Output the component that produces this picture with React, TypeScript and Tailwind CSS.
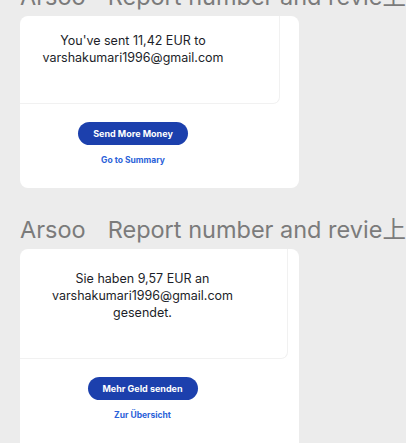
import React from "react";

type Receipt = {
  lines: string[];
  cta: string;
  link: string;
  colWidth: string;
  panelWidth: string;
  panelHeight: string;
  textTop: string;
  bottom: string;
};

const RECEIPTS: Receipt[] = [
  {
    lines: ["You've sent 11,42 EUR to", "varshakumari1996@gmail.com"],
    cta: "Send More Money",
    link: "Go to Summary",
    colWidth: "w-[226px]",
    panelWidth: "w-[260px]",
    panelHeight: "h-[88px]",
    textTop: "pt-[16px]",
    bottom: "pb-[22px]",
  },
  {
    lines: ["Sie haben 9,57 EUR an", "varshakumari1996@gmail.com", "gesendet."],
    cta: "Mehr Geld senden",
    link: "Zur Übersicht",
    colWidth: "w-[245px]",
    panelWidth: "w-[268px]",
    panelHeight: "h-[110px]",
    textTop: "pt-[21px]",
    bottom: "pb-[40px]",
  },
];

export default function App() {
  return (
    <div className="h-[443px] overflow-hidden bg-[#ececec] pl-[20px] font-['Inter',sans-serif]">
      <div className="mt-[-17px] flex flex-col gap-[28px]">
        {RECEIPTS.map((r, i) => (
          <section key={i} className="flex flex-col gap-[5px]">
            <Title />
            <Card receipt={r} />
          </section>
        ))}
      </div>
    </div>
  );
}

function Title() {
  return (
    <h2 className="flex h-[28px] items-center whitespace-nowrap font-['Inter','Noto_Sans_CJK_SC',sans-serif] text-[23.5px] leading-[28px] font-normal text-[#7b7b7b]">
      <span>Arsoo</span>
      <span className="ml-[22px]">Report number and revie上</span>
    </h2>
  );
}

function Card({ receipt }: { receipt: Receipt }) {
  return (
    <div className={`${receipt.bottom} w-[279px] rounded-[8px] bg-white`}>
      <div
        className={`${receipt.panelWidth} ${receipt.panelHeight} ${receipt.textTop} rounded-br-[7px] border-r border-b border-[#f1f1f1]`}
      >
        <p className={`${receipt.colWidth} text-center text-[12.5px] leading-[17px] text-[#1c1e29]`}>
          {receipt.lines.map((l, i) => (
            <span key={i} className="block">
              {l}
            </span>
          ))}
        </p>
      </div>
      <div className={`${receipt.colWidth} mt-[18px] flex flex-col items-center`}>
        <button
          type="button"
          className="h-[23px] w-[110px] rounded-full bg-[#1c40ad] text-[9px] font-bold text-white"
        >
          {receipt.cta}
        </button>
        <a className="mt-[9px] text-[8.5px] leading-[12px] font-bold text-[#2b62d9]">
          {receipt.link}
        </a>
      </div>
    </div>
  );
}
